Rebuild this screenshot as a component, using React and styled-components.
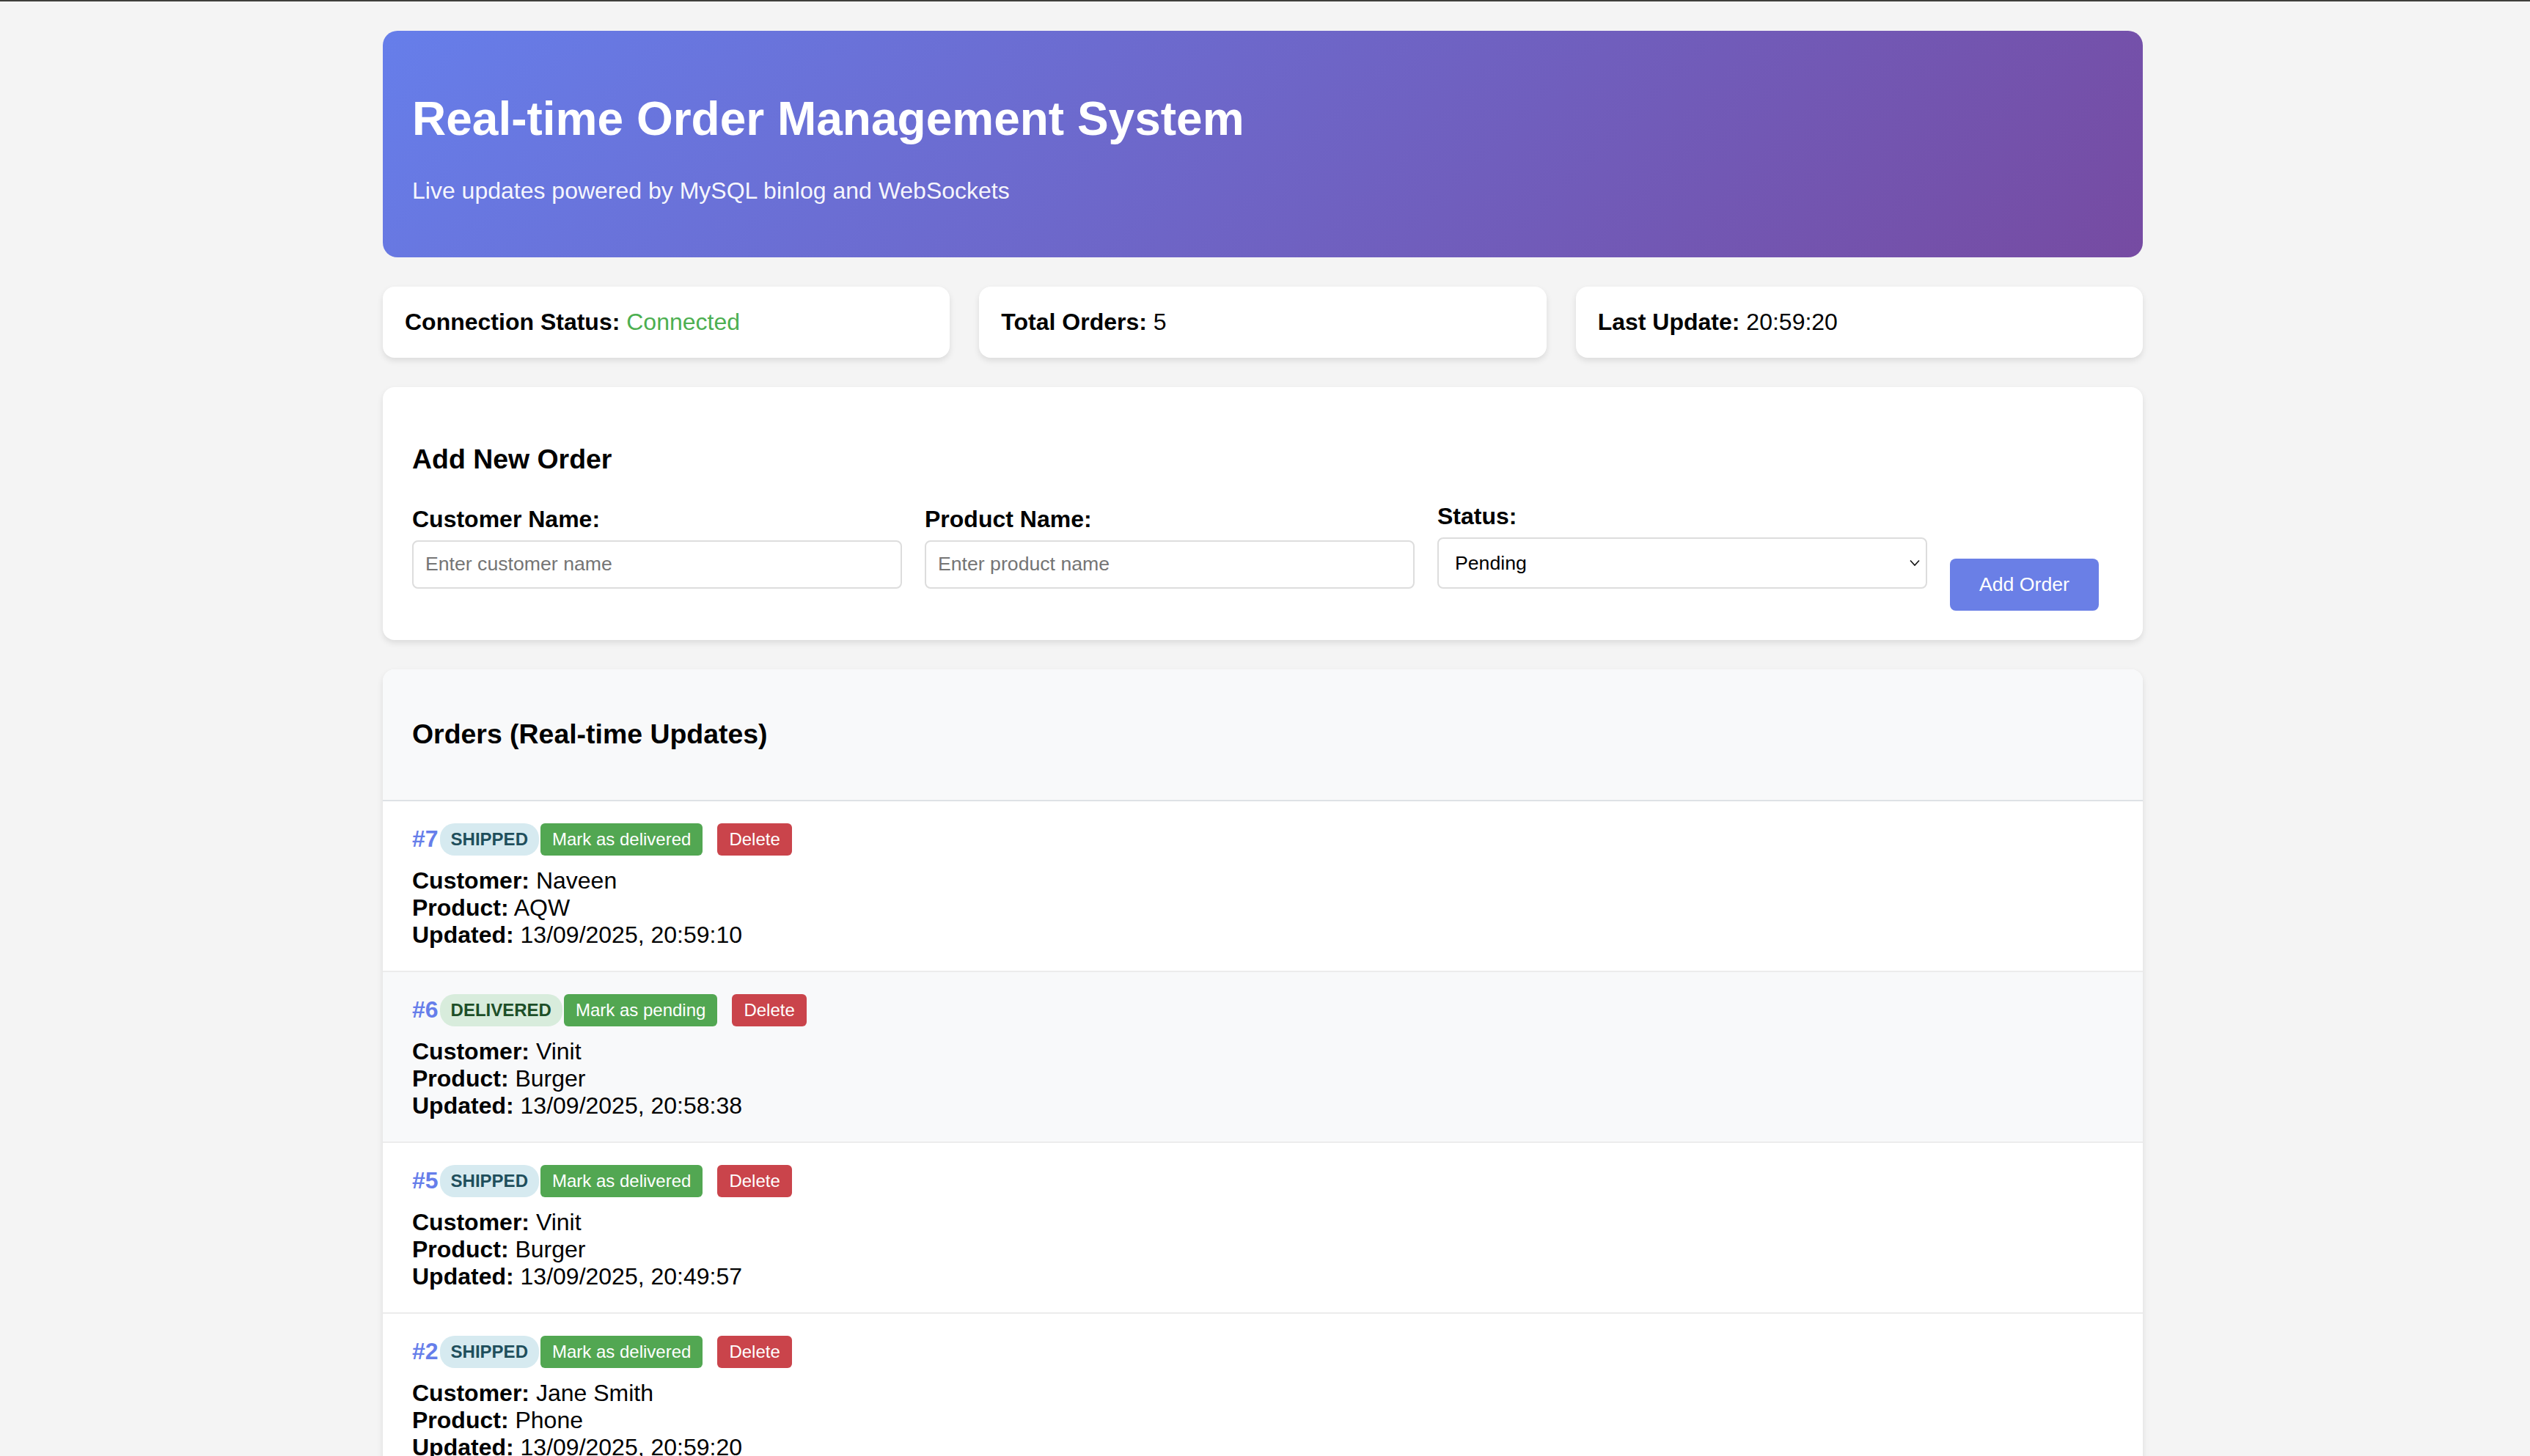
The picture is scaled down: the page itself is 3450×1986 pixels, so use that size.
import React from "react";
import styled, { createGlobalStyle } from "styled-components";

const GlobalStyle = createGlobalStyle`
  html {
    border-top: 2px solid #3f3f3b;
    background: #f4f4f4;
    overflow: hidden;
  }
  body {
    margin: 0;
    padding: 40px 6px 0 0;
    background: #f4f4f4;
    font-family: "Liberation Sans", Arial, Helvetica, sans-serif;
    color: #000;
  }
  * { box-sizing: border-box; }
`;

const Container = styled.div`
  max-width: 2400px;
  margin: 0 auto;
  display: flex;
  flex-direction: column;
  gap: 40px;
`;

const Header = styled.header`
  background: linear-gradient(135deg, #667eea 0%, #764ba2 100%);
  color: #fff;
  padding: 40px;
  border-radius: 20px;
`;

const Title = styled.h1`
  font-size: 64px;
  font-weight: 700;
  margin: 42.9px 0;
  line-height: normal;
`;

const Subtitle = styled.p`
  font-size: 32px;
  margin: 32px 0;
  line-height: normal;
  color: rgba(255, 255, 255, 0.96);
`;

const StatsGrid = styled.div`
  display: grid;
  grid-template-columns: repeat(3, 1fr);
  gap: 40px;
`;

const StatCard = styled.div`
  background: #fff;
  padding: 30px;
  border-radius: 16px;
  box-shadow: 0 4px 8px rgba(0, 0, 0, 0.1);
  font-size: 32px;
  line-height: normal;
`;

const StatValue = styled.span`
  color: ${(p) => p.$color || "#000"};
`;

const Card = styled.section`
  background: #fff;
  border-radius: 16px;
  box-shadow: 0 4px 8px rgba(0, 0, 0, 0.1);
  padding: 40px;
`;

const SectionTitle = styled.h3`
  font-size: 37.44px;
  font-weight: 700;
  margin: 37.44px 0;
  line-height: normal;
`;

const FormRow = styled.div`
  display: grid;
  grid-template-columns: 1fr 1fr 1fr auto;
  column-gap: 31px;
  align-items: end;
  padding-right: 20px;
`;

const FormGroup = styled.div`
  margin-bottom: 30px;
`;

const Label = styled.label`
  display: block;
  font-size: 32px;
  font-weight: 700;
  line-height: normal;
  margin-bottom: 10px;
`;

const TextInput = styled.input`
  display: block;
  width: 100%;
  height: 66px;
  padding: 0 16px;
  border: 2px solid #ddd;
  border-radius: 8px;
  font-family: "Liberation Sans", Arial, sans-serif;
  font-size: 26.67px;
  color: #000;
  background: #fff;
  outline: none;
  &::placeholder {
    color: #757575;
  }
`;

const SelectWrap = styled.div`
  position: relative;
`;

const Select = styled.select`
  display: block;
  width: 100%;
  height: 70px;
  padding: 0 40px 0 22px;
  border: 2px solid #ddd;
  border-radius: 8px;
  font-family: "Liberation Sans", Arial, sans-serif;
  font-size: 26.67px;
  color: #000;
  background: #fff;
  appearance: none;
  -webkit-appearance: none;
  outline: none;
`;

const Chevron = styled.svg`
  position: absolute;
  right: 10px;
  top: 50%;
  transform: translateY(-50%);
  pointer-events: none;
`;

const PrimaryButton = styled.button`
  background: #6a7fe6;
  color: #fff;
  border: none;
  border-radius: 8px;
  padding: 20px 40px;
  font-family: "Liberation Sans", Arial, sans-serif;
  font-size: 26.67px;
  line-height: normal;
  cursor: pointer;
`;

const OrdersCard = styled.section`
  background: #fff;
  border-radius: 16px;
  box-shadow: 0 4px 8px rgba(0, 0, 0, 0.1);
  overflow: hidden;
`;

const OrdersHeader = styled.div`
  background: #f8f9fa;
  padding: 30px 40px;
  border-bottom: 2px solid #dee2e6;
`;

const OrderRow = styled.div`
  background: ${(p) => (p.$highlight ? "#f8f9fa" : "#fff")};
  padding: 30px 40px;
  border-bottom: 2px solid #ececec;
`;

const OrderHead = styled.div`
  display: flex;
  align-items: center;
`;

const OrderId = styled.span`
  font-size: 32px;
  font-weight: 700;
  color: #667eea;
  line-height: normal;
  margin-right: 2px;
`;

const badgeColors = {
  shipped: { bg: "#d6eaf0", fg: "#1f4f5c" },
  delivered: { bg: "#d8ecdc", fg: "#1d4f28" },
  pending: { bg: "#fff3cd", fg: "#856404" },
};

const StatusBadge = styled.span`
  font-size: 24px;
  font-weight: 700;
  text-transform: uppercase;
  line-height: normal;
  padding: 8px 15px;
  border-radius: 20px;
  background: ${(p) => badgeColors[p.$status].bg};
  color: ${(p) => badgeColors[p.$status].fg};
`;

const ActionButton = styled.button`
  font-family: "Liberation Sans", Arial, sans-serif;
  font-size: 24px;
  line-height: normal;
  padding: 8px 16px;
  border: none;
  border-radius: 6px;
  color: #fff;
  background: ${(p) => (p.$variant === "danger" ? "#ca444b" : "#52a752")};
  margin-left: ${(p) => (p.$variant === "danger" ? "20px" : "2px")};
  cursor: pointer;
`;

const Details = styled.div`
  margin-top: 16px;
  font-size: 32px;
  line-height: normal;
`;

const DetailLine = styled.div``;

const orders = [
  { id: 7, status: "shipped", customer: "Naveen", product: "AQW", updated: "13/09/2025, 20:59:10" },
  { id: 6, status: "delivered", customer: "Vinit", product: "Burger", updated: "13/09/2025, 20:58:38", highlight: true },
  { id: 5, status: "shipped", customer: "Vinit", product: "Burger", updated: "13/09/2025, 20:49:57" },
  { id: 2, status: "shipped", customer: "Jane Smith", product: "Phone", updated: "13/09/2025, 20:59:20" },
  { id: 1, status: "pending", customer: "John Doe", product: "Laptop", updated: "13/09/2025, 20:40:12" },
];

const nextAction = {
  shipped: "Mark as delivered",
  delivered: "Mark as pending",
  pending: "Mark as shipped",
};

export default function App() {
  return (
    <>
      <GlobalStyle />
      <Container>
        <Header>
          <Title>Real-time Order Management System</Title>
          <Subtitle>Live updates powered by MySQL binlog and WebSockets</Subtitle>
        </Header>

        <StatsGrid>
          <StatCard>
            <strong>Connection Status:</strong> <StatValue $color="#4caf50">Connected</StatValue>
          </StatCard>
          <StatCard>
            <strong>Total Orders:</strong> <StatValue>5</StatValue>
          </StatCard>
          <StatCard>
            <strong>Last Update:</strong> <StatValue>20:59:20</StatValue>
          </StatCard>
        </StatsGrid>

        <Card>
          <SectionTitle>Add New Order</SectionTitle>
          <FormRow>
            <FormGroup>
              <Label>Customer Name:</Label>
              <TextInput placeholder="Enter customer name" />
            </FormGroup>
            <FormGroup>
              <Label>Product Name:</Label>
              <TextInput placeholder="Enter product name" />
            </FormGroup>
            <FormGroup>
              <Label>Status:</Label>
              <SelectWrap>
                <Select defaultValue="pending">
                  <option value="pending">Pending</option>
                  <option value="shipped">Shipped</option>
                  <option value="delivered">Delivered</option>
                </Select>
                <Chevron width="14" height="9" viewBox="0 0 14 9">
                  <polyline points="1,1 7,7.5 13,1" fill="none" stroke="#111" strokeWidth="1.6" />
                </Chevron>
              </SelectWrap>
            </FormGroup>
            <PrimaryButton>Add Order</PrimaryButton>
          </FormRow>
        </Card>

        <OrdersCard>
          <OrdersHeader>
            <SectionTitle>Orders (Real-time Updates)</SectionTitle>
          </OrdersHeader>
          {orders.map((o) => (
            <OrderRow key={o.id} $highlight={o.highlight}>
              <OrderHead>
                <OrderId>#{o.id}</OrderId>
                <StatusBadge $status={o.status}>{o.status}</StatusBadge>
                <ActionButton>{nextAction[o.status]}</ActionButton>
                <ActionButton $variant="danger">Delete</ActionButton>
              </OrderHead>
              <Details>
                <DetailLine><strong>Customer:</strong> {o.customer}</DetailLine>
                <DetailLine><strong>Product:</strong> {o.product}</DetailLine>
                <DetailLine><strong>Updated:</strong> {o.updated}</DetailLine>
              </Details>
            </OrderRow>
          ))}
        </OrdersCard>
      </Container>
    </>
  );
}
